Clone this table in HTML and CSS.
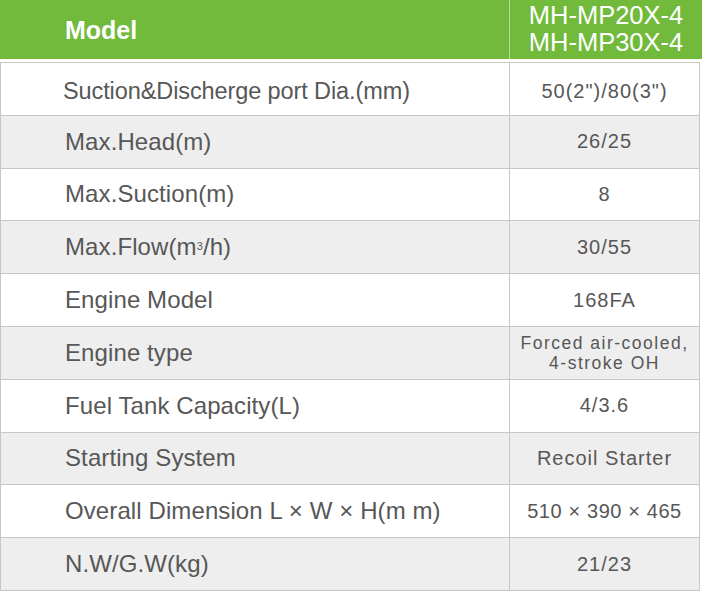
FILE: index.html
```html
<!DOCTYPE html>
<html lang="en">
<head>
<meta charset="utf-8">
<title>Specification</title>
<link rel="stylesheet" href="styles.css">
</head>
<body>
<div class="spec">
  <div class="head">
    <div class="head-label">Model</div>
    <div class="head-value">MH-MP20X-4<br>MH-MP30X-4</div>
  </div>
  <div class="rows">
    <div class="row first"><div class="label narrow">Suction&amp;Discherge port Dia.(mm)</div><div class="value">50(2")/80(3")</div></div>
    <div class="row alt"><div class="label">Max.Head(m)</div><div class="value">26/25</div></div>
    <div class="row"><div class="label">Max.Suction(m)</div><div class="value">8</div></div>
    <div class="row alt"><div class="label">Max.Flow(m<sup>3</sup>/h)</div><div class="value">30/55</div></div>
    <div class="row"><div class="label">Engine Model</div><div class="value">168FA</div></div>
    <div class="row alt"><div class="label">Engine type</div><div class="value small">Forced air-cooled,<br>4-stroke OH</div></div>
    <div class="row"><div class="label">Fuel Tank Capacity(L)</div><div class="value">4/3.6</div></div>
    <div class="row alt"><div class="label">Starting System</div><div class="value">Recoil Starter</div></div>
    <div class="row"><div class="label">Overall Dimension L × W × H(m m)</div><div class="value tight">510 × 390 × 465</div></div>
    <div class="row alt"><div class="label">N.W/G.W(kg)</div><div class="value">21/23</div></div>
  </div>
</div>
</body>
</html>
```

FILE: styles.css
```css
html, body {
  margin: 0;
  padding: 0;
  background: #ffffff;
}
body {
  font-family: "Liberation Sans", Arial, sans-serif;
  color: #575757;
}
.spec {
  width: 702px;
}
.head {
  display: grid;
  grid-template-columns: 509px 1fr;
  height: 59px;
  background: #71ba3b;
  color: #ffffff;
}
.head-label {
  display: flex;
  align-items: center;
  padding-left: 65px;
  padding-top: 2px;
  font-size: 25px;
  font-weight: 700;
}
.head-value {
  border-left: 1px solid #b9dca0;
  display: flex;
  align-items: center;
  justify-content: center;
  text-align: center;
  font-size: 25.5px;
  line-height: 27px;
  padding-bottom: 2px;
}
.rows {
  margin-top: 3px;
  width: 700px;
  border-left: 1px solid #c6c6c6;
  border-right: 1px solid #c6c6c6;
  border-bottom: 1px solid #c6c6c6;
  box-sizing: border-box;
}
.row {
  display: grid;
  grid-template-columns: 508px 1fr;
  height: 52.8px;
  box-sizing: border-box;
  border-top: 1px solid #c6c6c6;
  background: #ffffff;
}
.row.first {
  padding-top: 6px;
}
.row.alt {
  background: #eeeeee;
}
.label {
  display: flex;
  align-items: center;
  padding-left: 64px;
  font-size: 24px;
  letter-spacing: 0.1px;
}
.label.narrow {
  padding-left: 62px;
  font-size: 23.5px;
  letter-spacing: -0.1px;
}
.label sup {
  font-size: 11px;
  line-height: 0;
  position: relative;
  top: -1px;
}
.value {
  border-left: 1px solid #c6c6c6;
  display: flex;
  align-items: center;
  justify-content: center;
  text-align: center;
  font-size: 20px;
  letter-spacing: 1px;
}
.first .value {
  margin-top: -6px;
  padding-top: 6px;
}
.value.tight {
  letter-spacing: 0.6px;
}
.value.small {
  font-size: 17.5px;
  line-height: 20px;
  letter-spacing: 1.5px;
  padding-top: 1px;
}
```
